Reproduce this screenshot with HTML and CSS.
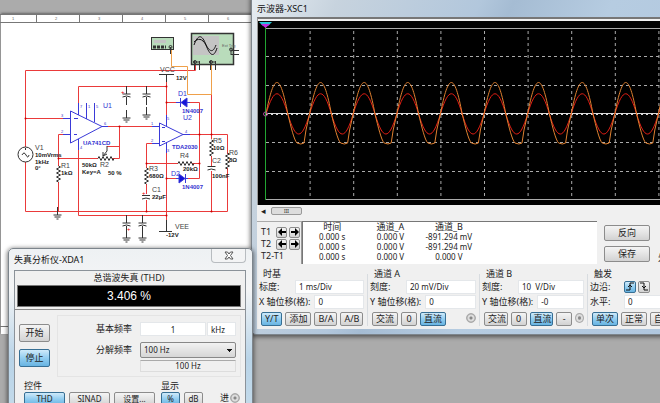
FILE: index.html
```html
<!DOCTYPE html>
<html lang="zh-CN">
<head>
<meta charset="utf-8">
<title>Multisim</title>
<link rel="stylesheet" href="styles.css">
</head>
<body>
<main class="desktop">
  <section class="sheet">
    <svg class="circuit" width="252" height="334" font-size="7">
      <defs>
        <path id="gnd" d="M0-8V0M-4 0H4M-3 2H3M-1 4H1"/>
        <path id="cap" d="M0 0V8M-4 8H4M-4 11Q0 9 4 11M0 11V19"/>
        <path id="resv" d="M0-8l2 1l-4 2l4 2l-4 2l4 2l-4 2l4 2l-4 2l2 1"/>
        <path id="resh" d="M-7 0l1-2l2 4l2-4l2 4l2-4l2 4l2-4l2 4l1-2"/>
      </defs>
      <g class="ruler">
        <path d="M0 14.500H252M0 22.500H252M36.500 14V22M79.500 14V22M122.500 14V22M165.500 14V22M208.500 14V22M0 326.500H252"/>
        <g class="tiny"><text x="12" y="20">1</text><text x="55" y="20">2</text><text x="98" y="20">3</text><text x="141" y="20">4</text><text x="184" y="20">5</text><text x="227" y="20">6</text></g>
      </g>
      <g class="wire red">
        <path d="M195.500 64V70.500H25.500V147M25.500 162V211.500H227.500V168M227.500 154V134.500H190M25.500 118.500H63M78.500 103V86.500H166.500M78.500 150V215.500H166.500M108 126.500H152M119.500 126.500V158.500H112M98 158.500H58.500M119.500 146.500H107M63 134.500H58.500V166M58.500 182V211M152 143.500H146.500V168M146.500 184V194M146.500 200V211M146.500 163.500H178M192 163.500H199.500M199.500 178.500V102.500H187M166.500 102.500H178M166.500 82V115M166.500 153V220M187 178.500H199.500M166.500 178.500H176M211.500 94V139M211.500 156V166M211.500 171V211"/>
      </g>
      <path class="wire orange" d="M171.500 50V66.500H187.500V94.500H211.500V64"/>
      <g class="wire blue">
        <path d="M70.500 111V143L102 126.500ZM63 118.500H70M63 134.500H70M102 126.500H108M78.500 103V115M86.500 103V119M94.500 103V122M78.500 139V150M74 118.500H78M74 134.500H77M159.500 123V146L183 134.500ZM152 126.500H159M152 143.500H159M183 134.500H190M166.500 115V126M166.500 142V153M162 127.500H165M162 141.500H165M176 102.500H190M180.500 98V107M176 178.500H188M185.500 174V183"/>
        <path class="solid" d="M187 98V107L181 102.500ZM179 174V183L185 178.500Z"/>
      </g>
      <g class="wire black">
        <circle cx="25.500" cy="154.500" r="7.500"/><path d="M22 155q2-4 4 0t3 0M25.500 148V150"/>
        <use href="#resv" x="58.500" y="174"/><use href="#resv" x="146.500" y="176"/><use href="#resv" x="211.500" y="148"/><use href="#resv" x="227.500" y="161"/>
        <use href="#resh" x="105" y="158.500"/><use href="#resh" x="185" y="163.500"/>
        <path d="M107 146V151L103 156M103 156V152M103 156L107 154"/>
        <path d="M142 195.500H150M142 199Q146 197 150 199M207.500 166.500H215.500M207.500 170Q211 168 215.500 170"/>
        <use href="#cap" x="126.500" y="86"/><use href="#cap" x="146.500" y="86"/><use href="#cap" x="126.500" y="215"/><use href="#cap" x="142.500" y="215"/>
        <use href="#gnd" x="126.500" y="118"/><use href="#gnd" x="146.500" y="115"/><use href="#gnd" x="57.500" y="215"/><use href="#gnd" x="126.500" y="238"/><use href="#gnd" x="142.500" y="238"/>
        <path d="M159 74.500H174M166.500 74V82M159 231.500H172M166.500 220V231"/>
        <rect class="device" x="151.500" y="37.500" width="22" height="12"/><rect class="device-screen" x="154" y="40" width="12" height="3"/><path d="M153 47H166" stroke-width="3" stroke-dasharray="3 1"/><circle cx="170.500" cy="47" r="1.500"/><path d="M170.500 47V54"/>
        <rect class="device" x="191.500" y="33.500" width="42" height="31" stroke-width="1.500"/><rect class="device-screen" x="193" y="36" width="26" height="19"/>
        <path class="bold" d="M194 45C198 34 202 34 206 45S214 58 217 48M194 42C198 38 202 38 206 45S213 53 216 45"/>
        <path d="M231 48V55M231 50.500H239M231 54.500H239M194.500 61V70M199.500 61V70M210.500 61V70M215.500 61V70M193 62H199M209 62H215"/>
        <circle cx="231" cy="49.500" r="1.500"/><circle cx="195" cy="62" r="1.500"/><circle cx="211" cy="62" r="1.500"/>
      </g>
      <g class="dots"><circle cx="25.500" cy="118.500" r="1"/><circle cx="58.500" cy="158.500" r="1"/><circle cx="119.500" cy="126.500" r="1"/><circle cx="166.500" cy="86.500" r="1"/><circle cx="166.500" cy="102.500" r="1"/><circle cx="199.500" cy="134.500" r="1"/><circle cx="211.500" cy="134.500" r="1"/><circle cx="199.500" cy="163.500" r="1"/><circle cx="146.500" cy="163.500" r="1"/><circle cx="166.500" cy="178.500" r="1"/><circle cx="146.500" cy="211.500" r="1"/><circle cx="211.500" cy="211.500" r="1"/><circle cx="166.500" cy="215.500" r="1"/></g>
      <g class="tiny plus"><text x="121" y="94">+</text><text x="142" y="195">+</text><text x="127" y="231">+</text></g>
      <g class="name">
        <text x="35" y="150">V1</text><text x="61" y="168">R1</text><text x="100" y="167">R2</text><text x="149" y="171">R3</text><text x="180" y="158">R4</text><text x="213" y="143">R5</text><text x="229" y="155">R6</text><text x="152" y="192">C1</text><text x="212" y="163">C2</text><text x="160" y="72">VCC</text><text x="175" y="229">VEE</text>
      </g>
      <g class="name part"><text x="103" y="108">U1</text><text x="178" y="96">D1</text><text x="183" y="120">U2</text><text x="171" y="176">D2</text></g>
      <g class="value">
        <text x="35" y="157">10mVrms</text><text x="35" y="164">1kHz</text><text x="35" y="170">0°</text><text x="61" y="175">1kΩ</text><text x="82" y="167">50kΩ</text><text x="82" y="174">Key=A</text><text x="108" y="175">50 %</text><text x="149" y="178">680Ω</text><text x="183" y="171">20kΩ</text><text x="213" y="150">10Ω</text><text x="229" y="162">8Ω</text><text x="152" y="199">22µF</text><text x="212" y="178">100nF</text><text x="176" y="80">12V</text><text x="166" y="237">-12V</text>
      </g>
      <g class="value model"><text x="83" y="145">UA741CD</text><text x="172" y="149">TDA2030</text><text x="182" y="113">1N4007</text><text x="182" y="189">1N4007</text></g>
      <g class="tiny pins"><text x="61" y="117">3</text><text x="61" y="133">2</text><text x="104" y="125">6</text><text x="80" y="108">7</text><text x="88" y="108">1</text><text x="96" y="108">5</text><text x="80" y="149">4</text><text x="151" y="125">1</text><text x="151" y="142">2</text><text x="185" y="133">4</text><text x="167" y="120">5</text><text x="167" y="152">3</text></g>
      <text class="tiny" x="222" y="47">Ext Trig</text>
    </svg>
  </section>

  <section class="window scope">
    <h1 class="title">示波器-XSC1</h1>
    <div class="client">
      <svg class="screen" width="100%" height="188">
        <defs>
          <g id="period">
            <path class="trace-a" d="M0 0C8-27 14-27 21.800 0C29.800 26.700 35.600 26.700 43.600 0"/>
            <path class="trace-b" d="M0 0C8-42 14-42 21.800 0C25 13 28 26 31 29Q35 31 38 29L40 16L43.600 0"/>
          </g>
          <pattern id="divisions" x="8" width="43.600" height="200" patternUnits="userSpaceOnUse"><path class="grid" d="M.5 0V200"/></pattern>
        </defs>
        <rect class="glass" y="2" width="100%" height="184"/>
        <rect x="9" y="10" width="100%" height="170" fill="url(#divisions)"/>
        <path class="grid" d="M8 37.500H500M8 66.500H500M8 123.500H500M8 152.500H500"/>
        <path class="edge" d="M8 9.500H500M8 180.500H500"/>
        <path class="axis" d="M8 94.500H500"/><path class="axis ticks" d="M8 95.500H500"/>
        <use href="#period" x="8" y="95"/><use href="#period" x="51.600" y="95"/><use href="#period" x="95.200" y="95"/><use href="#period" x="138.800" y="95"/><use href="#period" x="182.400" y="95"/><use href="#period" x="226" y="95"/><use href="#period" x="269.600" y="95"/><use href="#period" x="313.200" y="95"/><use href="#period" x="356.800" y="95"/><use href="#period" x="400.400" y="95"/>
        <path class="cursor" d="M7.500 8V181"/>
        <path fill="#24c5d5" d="M1 3H14L10 7H5Z"/><path fill="#c22be0" d="M3 5H12L7.500 9Z"/>
        <circle class="origin" cx="7.500" cy="95" r="2"/>
      </svg>
      <div class="scroll"><span class="arrow">◂</span><span class="thumb">III</span></div>
      <div class="readout">
        <div class="cursors">
          <div class="cursor-row"><span>T1</span><button class="step" aria-label="T1 左移"><svg width="8" height="8"><path d="M0 4L4 0V3H8V5H4V8Z"/></svg></button><button class="step" aria-label="T1 右移"><svg width="8" height="8"><path d="M8 4L4 0V3H0V5H4V8Z"/></svg></button></div>
          <div class="cursor-row"><span>T2</span><button class="step" aria-label="T2 左移"><svg width="8" height="8"><path d="M0 4L4 0V3H8V5H4V8Z"/></svg></button><button class="step" aria-label="T2 右移"><svg width="8" height="8"><path d="M8 4L4 0V3H0V5H4V8Z"/></svg></button></div>
          <div class="cursor-row">T2-T1</div>
        </div>
        <div class="values">
          <table>
            <thead><tr><th>时间</th><th>通道_A</th><th>通道_B</th></tr></thead>
            <tbody>
              <tr><td>0.000 s</td><td>0.000 V</td><td>-891.294 mV</td></tr>
              <tr><td>0.000 s</td><td>0.000 V</td><td>-891.294 mV</td></tr>
              <tr><td>0.000 s</td><td>0.000 V</td><td>0.000 V</td></tr>
            </tbody>
          </table>
        </div>
        <div class="actions"><button>反向</button><button>保存</button></div>
        <span class="external">外</span>
      </div>
      <div class="groups">
        <fieldset class="group">
          <legend>时基</legend>
          <div class="field"><label class="scale" for="tb">标度:</label><input id="tb" value="1 ms/Div"></div>
          <div class="field"><label for="tx">X 轴位移(格):</label><input id="tx" value="0"></div>
          <div class="keys"><button class="on">Y/T</button><button>添加</button><button>B/A</button><button>A/B</button></div>
        </fieldset>
        <fieldset class="group">
          <legend>通道 A</legend>
          <div class="field"><label class="scale" for="as">刻度:</label><input id="as" value="20 mV/Div"></div>
          <div class="field"><label for="ay">Y 轴位移(格):</label><input id="ay" value="0"></div>
          <div class="keys"><button>交流</button><button>0</button><button class="on">直流</button><input class="port" type="radio" aria-label="通道 A"></div>
        </fieldset>
        <fieldset class="group">
          <legend>通道 B</legend>
          <div class="field"><label class="scale" for="bs">刻度:</label><input id="bs" value="10  V/Div"></div>
          <div class="field"><label for="by">Y 轴位移(格):</label><input id="by" value="-0"></div>
          <div class="keys"><button>交流</button><button>0</button><button class="on">直流</button><button>-</button><input class="port" type="radio" aria-label="通道 B"></div>
        </fieldset>
        <fieldset class="group trigger">
          <legend>触发</legend>
          <div class="field"><span class="scale">边沿:</span><button class="edge-key on" aria-label="上升沿"><svg width="10" height="9"><path d="M1 8H5V1H9M3 5L5 3L7 5"/></svg></button><button class="edge-key" aria-label="下降沿"><svg width="10" height="9"><path d="M1 1H5V8H9M3 4L5 6L7 4"/></svg></button></div>
          <div class="field"><label class="scale" for="lv">水平:</label><input id="lv" value="0"></div>
          <div class="keys"><button class="on">单次</button><button>正常</button><button>自动</button></div>
        </fieldset>
      </div>
    </div>
  </section>

  <section class="window analyzer">
    <header class="bar"><h1 class="title">失真分析仪-XDA1</h1><button class="close" aria-label="关闭"><svg width="10" height="9"><path d="M1 1H3.500L5 3L6.500 1H9L6.500 4.500L9 8H6.500L5 6L3.500 8H1L3.500 4.500Z"/></svg></button></header>
    <div class="client">
      <div class="meter"><p class="caption">总谐波失真 (THD)</p><output class="display">3.406 %</output></div>
      <div class="setup">
        <div class="run"><button>开始</button><button class="on">停止</button></div>
        <div class="freq">
          <div class="line"><label for="ff">基本频率</label><input id="ff" class="amount" value="1"><input class="unit" value="kHz" aria-label="单位"></div>
          <div class="line"><label for="rf">分解频率</label><select id="rf"><option>100 Hz</option></select></div>
          <output class="resolved">100 Hz</output>
        </div>
      </div>
      <div class="modes">
        <fieldset><legend>控件</legend><div class="keys wide"><button class="on">THD</button><button>SINAD</button><button>设置...</button></div></fieldset>
        <fieldset><legend>显示</legend><div class="keys"><button class="on">%</button><button>dB</button></div></fieldset>
        <label class="input-port">进<input class="port" type="radio"></label>
      </div>
    </div>
  </section>
</main>
</body>
</html>
```

FILE: styles.css
```css
* { box-sizing: border-box; }
body { margin: 0; font: 9px/12px "Noto Sans", "Noto Sans CJK SC", sans-serif; color: #222; }
.desktop { position: relative; height: 100vh; overflow: hidden; background: #ababab; }
button, input, select { font: inherit; color: inherit; margin: 0; padding: 0; }
button { border: 1px solid #8c8c8c; border-radius: 2px; background: linear-gradient(#f4f4f4, #e4e4e4 50%, #d2d2d2); white-space: nowrap; }
button.on { border-color: #376f94; background: linear-gradient(#cfeafa, #92cdf0 50%, #68b4e2); }
input, select { min-width: 0; border: 1px solid #e4e7ea; background: #fff; border-radius: 0; font-size: 8px; }
fieldset { border: 0; margin: 0; padding: 0; min-width: 0; }
legend { padding: 0; }
h1, p { margin: 0; }

/* schematic */
.sheet { position: absolute; left: 1px; top: 14px; width: 251px; height: 320px; background: #fff; box-shadow: 0 -1px 2px #666; }
.circuit { position: absolute; left: -1px; top: -14px; font-family: "Liberation Sans", sans-serif; }
.ruler path { stroke: #777; fill: none; }
.tiny { font-size: 4px; fill: #666; }
.tiny.plus { font-size: 6px; fill: #e00; }
.tiny.pins { fill: #33c; }
.wire { fill: none; stroke-width: 1; }
.red { stroke: #ea3a3a; }
.orange { stroke: #efa04a; }
.blue { stroke: #3a3ad8; }
.solid { fill: #1414d8; }
.black { stroke: #333; }
.bold { stroke: #111; }
.device { fill: #b9dcbb; }
.device-screen { fill: #c4c4c4; stroke: none; }
.dots { fill: #c00; }
.name { fill: #444; }
.value { font-size: 6px; font-weight: bold; fill: #222; }
.name.part, .value.model { fill: #3333d0; }

/* windows */
.window { position: absolute; border: 1px solid #7d858c; border-radius: 5px; box-shadow: 0 1px 4px 1px rgba(0, 0, 0, .5); }
.title { font-size: 9px; font-weight: normal; line-height: 16px; color: #111; }
.client { background: #f0f0f0; }

/* oscilloscope */
.scope { left: 251px; right: -60px; top: -6px; padding: 6px 5px 5px; background: linear-gradient(115deg, #e7edf2 0, #c7d3de 80px, #b2c7dc 210px, #a5bcd3 240px, #b6cce1 330px, #aec5dd); }
.scope .title { height: 18px; }
.screen { display: block; border-top: 2px solid #777; border-left: 1px solid #999; }
.glass { fill: #000; }
.grid { stroke: #aaa; stroke-dasharray: 3 3; fill: none; }
.edge { stroke: #aaa; }
.axis { stroke: #d8d8d8; }
.axis.ticks { stroke-dasharray: 2 3; }
.trace-a { fill: none; stroke: #e41e14; }
.trace-b { fill: none; stroke: #e08030; }
.cursor { stroke: #22a532; }
.origin { fill: none; stroke: #a84a9a; }
.scope .screen { margin-top: -2px; }
.scroll { display: flex; align-items: center; gap: 4px; height: 12px; padding-left: 4px; }
.arrow { width: 6px; }
.thumb { width: 31px; height: 8px; border: 1px solid #999; border-radius: 2px; background: #ddd; font-size: 5px; line-height: 6px; text-align: center; }
.readout { display: flex; height: 43px; margin-top: 4px; }
.cursors { width: 45px; padding: 4px 0 0 4px; border-top: 1px solid #aaa; border-right: 1px solid #999; }
.cursor-row { display: flex; align-items: center; gap: 2px; height: 12px; }
.cursor-row span { width: 13px; }
.step { display: flex; align-items: center; justify-content: center; width: 11px; height: 11px; }
.values { width: 295px; background: #fff; border-top: 1px solid #777; border-left: 1px solid #777; }
table { border-spacing: 0; font-size: 8px; line-height: 10px; table-layout: fixed; width: 175px; }
th { font-size: 9px; font-weight: normal; }
th, td { padding: 0; height: 10px; text-align: center; white-space: nowrap; }
.actions { display: flex; flex-direction: column; gap: 5px; padding: 4px 8px 0 7px; }
.actions button { width: 46px; height: 16px; line-height: 12px; }
.external { align-self: end; }
.groups { display: grid; grid-template-columns: 111px 112px 108px 1fr; margin-top: 5px; padding-bottom: 3px; }
.group { padding: 0 3px 0 2px; border-right: 1px solid #d8dce0; }
.group legend { padding-left: 4px; line-height: 10px; }
.field { display: flex; align-items: center; gap: 4px; height: 15px; white-space: nowrap; }
.scale { width: 32px; }
.field input { flex: 1; height: 14px; padding-left: 3px; }
.keys { display: flex; gap: 3px; margin-top: 3px; }
.keys button { min-width: 16px; height: 14px; padding: 0 3px; line-height: 10px; }
.group .keys { padding-left: 2px; }
.port { appearance: none; width: 10px; height: 10px; border: 1px solid #aaa; border-radius: 50%; background: radial-gradient(#888 0 1px, #ddd 2px 3px, #aaa 4px); }
.keys .port { margin-left: auto; margin-top: 1px; }
.edge-key { width: 12px; height: 12px; line-height: 9px; }
.edge-key svg { display: block; fill: none; stroke: #111; }
.trigger .field { gap: 2px; }

/* distortion analyzer */
.analyzer { left: 8px; top: 248px; width: 245px; padding: 0 6px 6px 5px; background: linear-gradient(#eef1f3, #f4f5f6 40px, #b9d4e8 110px, #c5dbea); }
.bar { display: flex; justify-content: space-between; height: 21px; }
.bar .title { line-height: 22px; }
.close { width: 35px; height: 14px; border-color: #b8bcc0; border-top: 0; border-radius: 0 0 4px 4px; background: #f3f4f5; }
.close svg { display: block; margin: auto; fill: #fff; stroke: #555; }
.analyzer .client { border: 1px solid #8b9299; }
.meter { padding: 0 4px 2px 2px; border-bottom: 1px solid #888; }
.caption { line-height: 14px; text-align: center; }
.display { display: block; height: 22px; border: 1px solid #777; background: #000; color: #fff; font: 12px/20px "Liberation Sans", sans-serif; text-align: center; }
.setup { display: flex; gap: 7px; padding: 5px 4px 5px 4px; }
.run { display: flex; flex-direction: column; gap: 7px; padding-top: 9px; }
.run button { width: 31px; height: 18px; line-height: 12px; }
.freq { flex: 1; min-width: 0; padding: 6px 4px 4px; border: 1px solid #e4e4e4; }
.line { display: flex; align-items: center; gap: 1px; height: 14px; margin-bottom: 7px; }
.line label { flex: none; width: 77px; padding-left: 34px; white-space: nowrap; }
.amount { width: 66px; height: 14px; text-align: center; }
.unit { flex: 1; width: 20px; height: 14px; padding-left: 3px; }
.line select { flex: 1; height: 16px; padding-left: 3px; border: 1px solid #888; border-radius: 2px; appearance: none; background: conic-gradient(from -45deg at 50% 100%, #111 90deg, transparent 0) right 3px center / 6px 3px no-repeat, linear-gradient(#f2f2f2, #d6d6d6); background: conic-gradient(from -45deg at 50% 100%, #111 90deg, transparent 0) right 3px center / 6px 3px no-repeat, linear-gradient(#f2f2f2, #d6d6d6); }
.resolved { display: block; height: 12px; margin: -4px 0 0 78px; border: 1px solid #ddd; border-top-color: #aaa; font-size: 8px; line-height: 10px; text-align: center; }
.modes { display: flex; align-items: flex-start; gap: 6px; padding: 0 5px 4px 9px; }
.modes legend { line-height: 8px; }
.modes .keys { gap: 4px; margin-top: 2px; font-size: 8px; }
.modes .keys button { width: 19px; }
.modes .wide button { width: 41px; }
.input-port { display: flex; align-items: center; gap: 1px; margin: 10px 0 0 auto; }
```
